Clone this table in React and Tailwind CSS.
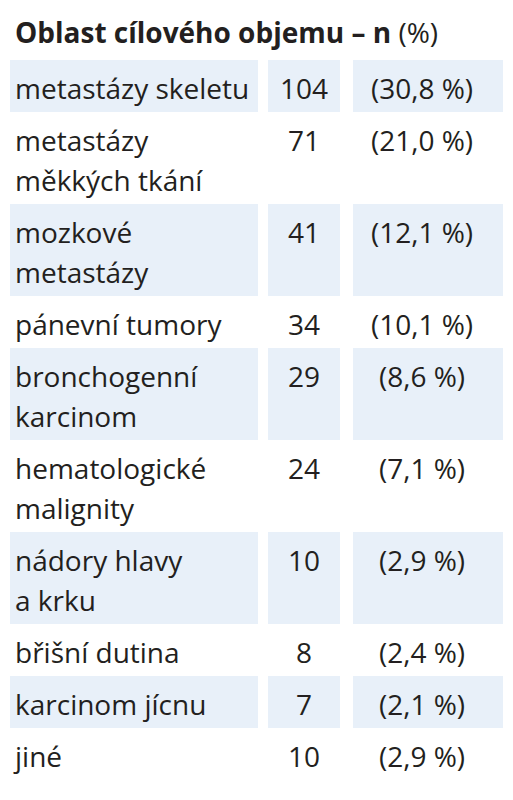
const rows = [
  { label: ["metastázy skeletu"], n: "104", pct: "(30,8 %)" },
  { label: ["metastázy", "měkkých tkání"], n: "71", pct: "(21,0 %)" },
  { label: ["mozkové", "metastázy"], n: "41", pct: "(12,1 %)" },
  { label: ["pánevní tumory"], n: "34", pct: "(10,1 %)" },
  { label: ["bronchogenní", "karcinom"], n: "29", pct: "(8,6 %)" },
  { label: ["hematologické", "malignity"], n: "24", pct: "(7,1 %)" },
  { label: ["nádory hlavy", "a krku"], n: "10", pct: "(2,9 %)" },
  { label: ["břišní dutina"], n: "8", pct: "(2,4 %)" },
  { label: ["karcinom jícnu"], n: "7", pct: "(2,1 %)" },
  { label: ["jiné"], n: "10", pct: "(2,9 %)" },
];

const App = () => {
  return (
    <div className="w-[513px] h-[800px] bg-white text-[#231f20] font-['Open_Sans',sans-serif] text-[28px] leading-[40px] pl-[10px]">
      {/* Header */}
      <div className="h-[60px] pt-[12px] pl-[5px] font-bold">
        Oblast cílového objemu – n <span className="font-normal">(%)</span>
      </div>

      {/* Rows */}
      {rows.map((row, i) => {
        const shaded = i % 2 === 0;
        const bg = shaded ? "bg-[#e8f0f9]" : "bg-white";
        return (
          <div key={i} className="flex">
            <div className={`w-[248px] pl-[5px] pt-[8px] pb-[4px] ${bg}`}>
              {row.label.map((line, j) => (
                <div key={j}>{line}</div>
              ))}
            </div>
            <div className={`w-[72px] ml-[10px] pt-[8px] pb-[4px] text-center ${bg}`}>
              {row.n}
            </div>
            <div className={`w-[150px] ml-[13px] pt-[8px] pb-[4px] pr-[12px] text-center ${bg}`}>
              {row.pct}
            </div>
          </div>
        );
      })}
    </div>
  );
};

export default App;
